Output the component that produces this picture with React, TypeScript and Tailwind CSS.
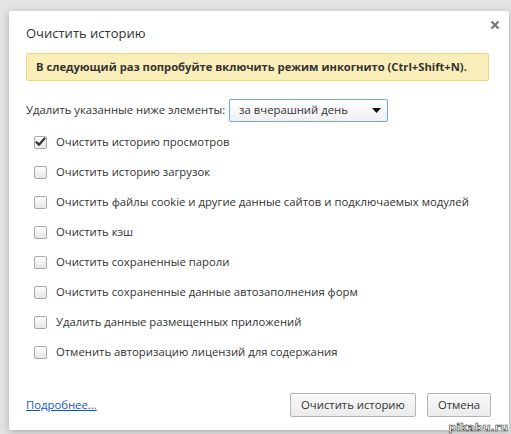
import React from "react";

const items = [
  { label: "Очистить историю просмотров", checked: true },
  { label: "Очистить историю загрузок", checked: false },
  { label: "Очистить файлы cookie и другие данные сайтов и подключаемых модулей", checked: false },
  { label: "Очистить кэш", checked: false },
  { label: "Очистить сохраненные пароли", checked: false },
  { label: "Очистить сохраненные данные автозаполнения форм", checked: false },
  { label: "Удалить данные размещенных приложений", checked: false },
  { label: "Отменить авторизацию лицензий для содержания", checked: false },
];

function Checkbox({ checked }: { checked: boolean }) {
  return (
    <div className="w-[13px] h-[13px] rounded-[2px] border border-[#a9a9a9] bg-gradient-to-b from-[#fefefe] to-[#e6e6e6] flex items-center justify-center shrink-0">
      {checked && (
        <svg width="11" height="10" viewBox="0 0 11 10">
          <path d="M1.5 5.2 L4 7.8 L9.5 1.5" fill="none" stroke="#333" strokeWidth="2.2" strokeLinecap="round" strokeLinejoin="round" />
        </svg>
      )}
    </div>
  );
}

export default function App() {
  return (
    <div
      className="relative w-[511px] h-[434px] overflow-hidden bg-[#e4e4e4] pt-[11px] pl-[9px]"
      style={{ fontFamily: '"Open Sans", "Noto Sans", sans-serif' }}
    >
      <div className="relative w-[500px] h-[419px] bg-white rounded-[2px] shadow-[0_2px_8px_rgba(0,0,0,0.25)] flex flex-col pl-[17px] pt-[14px]">
        <div className="absolute right-[9px] top-[9px] text-[#7a7a7a]">
          <svg width="10" height="10" viewBox="0 0 10 10">
            <path d="M1.5 1.5 L8.5 8.5 M8.5 1.5 L1.5 8.5" stroke="#777" strokeWidth="2.2" />
          </svg>
        </div>
        <div className="h-[17px] flex items-center text-[13px] text-[#333] leading-none">Очистить историю</div>
        <div className="mt-[11px] w-[463px] h-[28px] bg-[#f9eeb8] border border-[#f0d67c] rounded-[2px] flex items-center pl-[9px] text-[11.2px] font-bold text-[#333]">
          В следующий раз попробуйте включить режим инкогнито (Ctrl+Shift+N).
        </div>
        <div className="mt-[18px] h-[23px] flex items-center text-[11.3px] text-[#333]">
          <span>Удалить указанные ниже элементы:</span>
          <div className="ml-[4px] w-[159px] h-[23px] rounded-[2px] border border-[#74a6e4] bg-gradient-to-b from-[#ffffff] to-[#eef0f3] flex items-center pl-[9px] pr-[6px] justify-between">
            <span>за вчерашний день</span>
            <svg width="9" height="5" viewBox="0 0 9 5">
              <path d="M0 0 L9 0 L4.5 5 Z" fill="#111" />
            </svg>
          </div>
        </div>
        <div className="mt-[5px] flex flex-col pl-[8px]">
          {items.map((it) => (
            <div key={it.label} className="h-[30px] flex items-center gap-[9px] text-[11.3px] text-[#333]">
              <Checkbox checked={it.checked} />
              <span>{it.label}</span>
            </div>
          ))}
        </div>
        <div className="mt-[26px] h-[24px] flex items-center pr-[18px]">
          <a className="text-[11.3px] text-[#1155cc] underline">Подробнее...</a>
          <div className="ml-auto flex gap-[11px]">
            <button className="w-[126px] h-[24px] rounded-[2px] border border-[#b5b5b5] bg-gradient-to-b from-[#f9f9f9] to-[#ebebeb] text-[11.3px] text-[#333]">
              Очистить историю
            </button>
            <button className="w-[64px] h-[24px] rounded-[2px] border border-[#b5b5b5] bg-gradient-to-b from-[#f9f9f9] to-[#ebebeb] text-[11.3px] text-[#333]">
              Отмена
            </button>
          </div>
        </div>
      </div>
      <div
        className="absolute right-[3px] bottom-[1px] text-[11px] font-bold text-white leading-none"
        style={{ WebkitTextStroke: "0.6px #333", fontFamily: '"DejaVu Sans", sans-serif' }}
      >
        pikabu.ru
      </div>
    </div>
  );
}
